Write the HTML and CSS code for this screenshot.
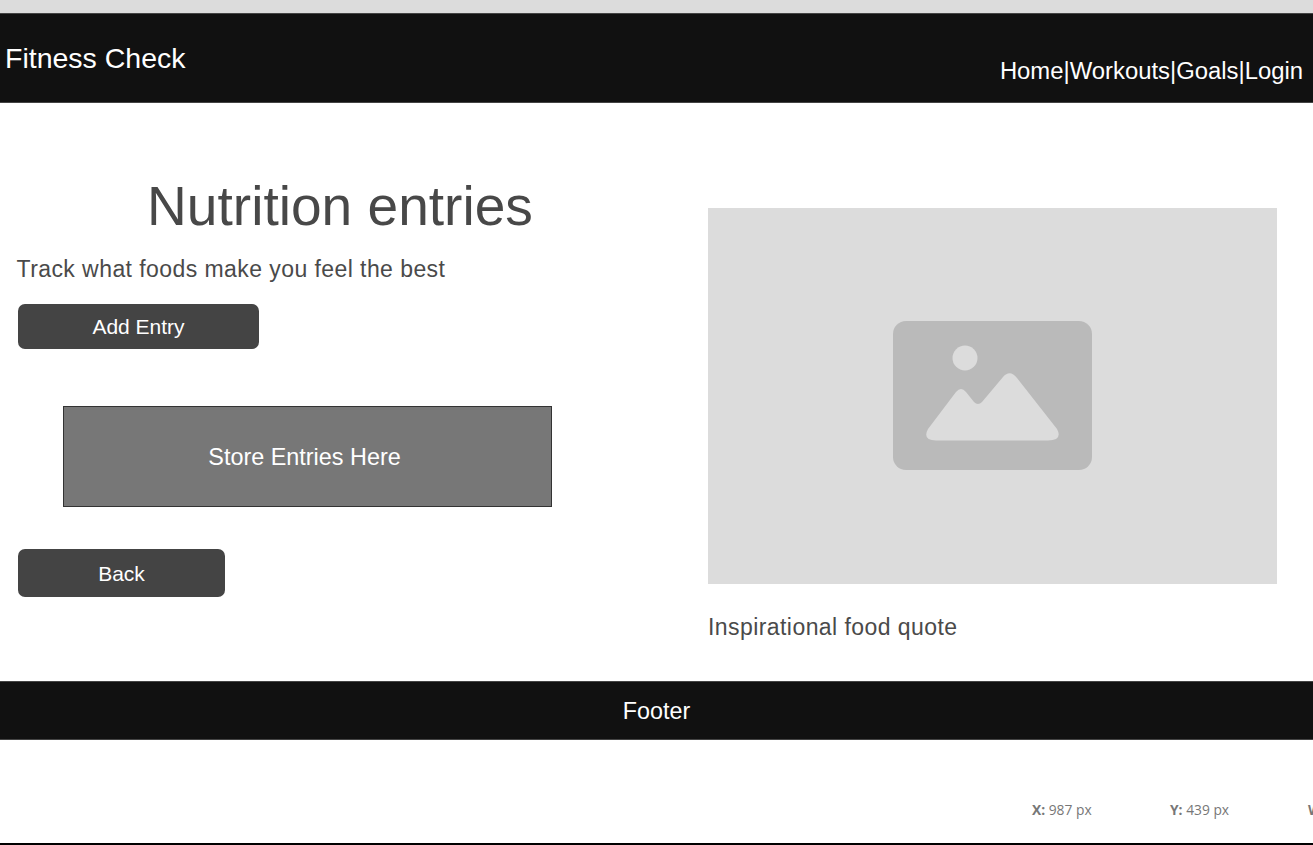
FILE: index.html
```html
<!DOCTYPE html>
<html>
<head lang="en">
    <meta charset="UTF-8">
    <title>Fitness Check</title>
    <link rel="stylesheet" href="styles.css">
</head>
<body>
<div class="top-strip"></div>
<header class="site-header">
    <div class="logo">Fitness Check</div>
    <nav class="site-nav">
        <a href="#">Home</a>|<a href="#">Workouts</a>|<a href="#">Goals</a>|<a href="#">Login</a>
    </nav>
</header>
<main class="page">
    <section class="entries">
        <h1 class="entries-title">Nutrition entries</h1>
        <p class="tagline">Track what foods make you feel the best</p>
        <button class="btn btn-add">Add Entry</button>
        <div class="store-box"><span>Store Entries Here</span></div>
        <button class="btn btn-back">Back</button>
    </section>
    <section class="side">
        <div class="placeholder">
            <svg class="placeholder-icon" width="199" height="149" viewBox="0 0 199 149">
                <rect width="199" height="149" rx="13" fill="#bababa"/>
                <circle cx="72" cy="37" r="12.5" fill="#dcdcdc"/>
                <path fill="#dcdcdc" d="M43 119.500H155Q170 119 164 108L124 57Q117 48 110 56L89 81Q85 85 81 81L73 71Q68 65 63 71L35 108Q29 119 43 119.500Z"/>
            </svg>
        </div>
        <p class="quote">Inspirational food quote</p>
    </section>
</main>
<footer class="site-footer"><span class="footer-text">Footer</span></footer>
<div class="stats">
    <span class="stat"><b>X:</b> 987 px</span>
    <span class="stat"><b>Y:</b> 439 px</span>
    <span class="stat"><b>W:</b> 569 px</span>
</div>
</body>
</html>
```

FILE: styles.css
```css
*{
    margin: 0;
    padding: 0;
    box-sizing: border-box;
}
html,body{
    height: 845px;
    overflow: hidden;
}
body{
    background: #fff;
    font-family: "Liberation Sans", Arial, sans-serif;
    color: #444;
    border-bottom: 2px solid #000;
    display: flex;
    flex-direction: column;
}
a{
    color: inherit;
    text-decoration: none;
}
.top-strip{
    height: 13px;
    background: #dcdcdc;
}
.site-header{
    height: 90px;
    background: #111;
    border-top: 1px solid #444;
    border-bottom: 1px solid #444;
    color: #fff;
    display: flex;
    justify-content: space-between;
    padding: 0 10px 0 5px;
}
.logo{
    font-size: 28.5px;
    line-height: 33px;
    margin-top: 28px;
}
.site-nav{
    font-size: 23.85px;
    line-height: 28px;
    margin-top: 43px;
}
.page{
    height: 578px;
    display: flex;
}
.entries{
    width: 708px;
    padding: 73px 0 0 18px;
}
.entries-title{
    width: 644px;
    font-size: 55.1px;
    font-weight: 400;
    line-height: 60px;
    text-align: center;
    color: #484848;
}
.tagline{
    font-size: 23px;
    letter-spacing: 0.43px;
    line-height: 26px;
    margin: 20px 0 0 -1.5px;
    color: #4a4a4a;
}
.btn{
    display: block;
    border: 0;
    border-radius: 7px;
    background: #444;
    color: #fff;
    font-family: inherit;
    font-size: 21px;
    padding-top: 1px;
}
.btn-add{
    width: 241px;
    height: 45px;
    margin-top: 22px;
}
.store-box{
    width: 489px;
    height: 101px;
    margin: 57px 0 0 45px;
    padding: 2px 6px 0 0;
    border: 1px solid #333;
    background: #777;
    color: #fff;
    font-size: 23.4px;
    display: flex;
    align-items: center;
    justify-content: center;
}
.btn-back{
    width: 207px;
    height: 48px;
    margin-top: 42px;
}
.side{
    padding-top: 105px;
}
.placeholder{
    width: 569px;
    height: 376px;
    background: #dcdcdc;
    display: flex;
    align-items: center;
    justify-content: center;
}
.placeholder-icon{
    display: block;
    margin-top: -1px;
}
.quote{
    font-size: 23px;
    letter-spacing: 0.43px;
    line-height: 26px;
    margin-top: 30px;
    color: #4a4a4a;
}
.site-footer{
    height: 59px;
    background: #111;
    border-top: 1px solid #444;
    border-bottom: 1px solid #444;
    color: #fff;
    font-size: 23.3px;
    display: flex;
    align-items: center;
    justify-content: center;
}
.footer-text{
    padding-top: 2px;
}
.stats{
    flex: 1;
    display: flex;
    padding: 61px 0 0 1032px;
    color: #777;
    font-family: "Open Sans", sans-serif;
    font-size: 13.8px;
    line-height: 17px;
    white-space: nowrap;
}
.stat{
    flex: 0 0 138px;
}
```
